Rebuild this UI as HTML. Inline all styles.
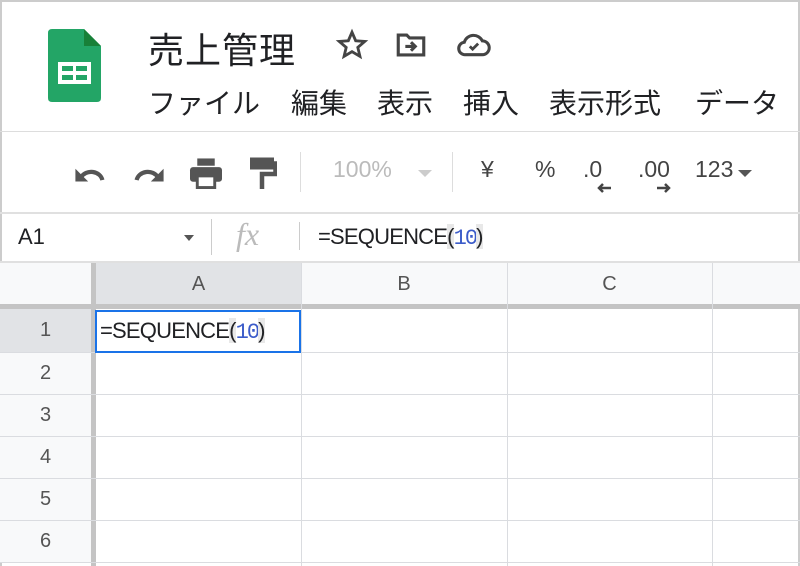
<!DOCTYPE html>
<html><head><meta charset="utf-8"><style>
*{margin:0;padding:0;box-sizing:border-box}
body{width:800px;height:566px;overflow:hidden;background:#fff;font-family:"Liberation Sans","Noto Sans CJK JP",sans-serif;position:relative;color:#202124}
.abs{position:absolute}
.title{left:148px;top:22px;font-size:36px;color:#202124;letter-spacing:1px}
.menu{top:82px;font-size:28px;color:#202124}
.tb{top:156px;font-size:23px;color:#444}
.rh{position:absolute;left:0;width:95px;text-align:center;font-size:20px;color:#555;background:#f8f9fa}
.ch{position:absolute;top:263px;height:42px;text-align:center;font-size:20px;color:#555;line-height:42px;background:#f8f9fa}
</style></head><body>
<div class="abs" style="left:0;top:0;width:800px;height:566px;border:2px solid #ccc;border-bottom:none"></div>
<svg class="abs" style="left:48px;top:29px" width="54" height="74" viewBox="0 0 54 74">
<path d="M4 0H36L53 17V69Q53 73 49 73H4Q0 73 0 69V4Q0 0 4 0Z" fill="#23a566"/>
<path d="M36 0V17H53Z" fill="#188038"/>
<rect x="10" y="33" width="33" height="22" fill="#fff"/>
<rect x="14" y="37" width="11" height="5" fill="#23a566"/><rect x="28" y="37" width="11" height="5" fill="#23a566"/>
<rect x="14" y="46" width="11" height="5" fill="#23a566"/><rect x="28" y="46" width="11" height="5" fill="#23a566"/>
</svg>
<div class="abs title">売上管理</div>
<svg class="abs" style="left:335px;top:28px" width="34" height="34" viewBox="0 0 24 24"><path d="M12 3l2.6 6 6.4.5-4.9 4.2 1.5 6.3L12 16.7 6.4 20l1.5-6.3L3 9.5l6.4-.5z" fill="none" stroke="#444" stroke-width="2"/></svg>
<svg class="abs" style="left:394px;top:28px" width="34" height="34" viewBox="0 0 24 24"><path d="M3 5h6l2 2h10v12H3z" fill="none" stroke="#444" stroke-width="2.2"/><path d="M8 13h7M12 10l3 3-3 3" fill="none" stroke="#444" stroke-width="2.2"/></svg>
<svg class="abs" style="left:456px;top:28px" width="36" height="34" viewBox="0 0 26 24"><path d="M7 19h12a5 5 0 0 0 0-10 7 7 0 0 0-13 1 4.5 4.5 0 0 0 1 9z" fill="none" stroke="#444" stroke-width="2.2"/><path d="M10 13l2 2 4-4" fill="none" stroke="#444" stroke-width="2"/></svg>
<div class="abs menu" style="left:148px">ファイル</div>
<div class="abs menu" style="left:291px">編集</div>
<div class="abs menu" style="left:377px">表示</div>
<div class="abs menu" style="left:463px">挿入</div>
<div class="abs menu" style="left:549px">表示形式</div>
<div class="abs menu" style="left:695px">データ</div>
<div class="abs" style="left:0;top:131px;width:800px;height:1px;background:#ddd"></div>
<svg class="abs" style="left:74px;top:160px" width="34" height="26" viewBox="0 0 24 18"><path d="M5 12a8 7 0 0 1 15 2" fill="none" stroke="#555" stroke-width="3"/><path d="M1 6v9h9z" fill="#555"/></svg>
<svg class="abs" style="left:131px;top:160px" width="34" height="26" viewBox="0 0 24 18"><path d="M19 12a8 7 0 0 0-15 2" fill="none" stroke="#555" stroke-width="3"/><path d="M23 6v9h-9z" fill="#555"/></svg>
<svg class="abs" style="left:188px;top:157px" width="36" height="32" viewBox="0 0 24 22"><rect x="6" y="1" width="12" height="5" fill="#555"/><rect x="1" y="7" width="22" height="10" rx="2" fill="#555"/><rect x="6" y="13" width="12" height="8" fill="#fff" stroke="#555" stroke-width="2"/></svg>
<svg class="abs" style="left:247px;top:156px" width="30" height="36" viewBox="0 0 20 24"><rect x="2" y="1" width="16" height="8" fill="#555"/><path d="M18 5h1v7H10v10" fill="none" stroke="#555" stroke-width="3"/></svg>
<div class="abs" style="left:300px;top:152px;width:1px;height:40px;background:#ddd"></div>
<div class="abs tb" style="left:333px;color:#bbb">100%</div>
<svg class="abs" style="left:418px;top:168px" width="14" height="10"><path d="M0 2h14L7 9z" fill="#ccc"/></svg>
<div class="abs" style="left:452px;top:152px;width:1px;height:40px;background:#ddd"></div>
<div class="abs tb" style="left:481px">¥</div>
<div class="abs tb" style="left:535px">%</div>
<div class="abs tb" style="left:583px">.0</div>
<svg class="abs" style="left:596px;top:182px" width="16" height="12"><path d="M15 6H4M7 2L3 6l4 4" fill="none" stroke="#444" stroke-width="2.5"/></svg>
<div class="abs tb" style="left:638px">.00</div>
<svg class="abs" style="left:656px;top:182px" width="16" height="12"><path d="M1 6h11M9 2l4 4-4 4" fill="none" stroke="#444" stroke-width="2.5"/></svg>
<div class="abs tb" style="left:695px">123</div>
<svg class="abs" style="left:738px;top:168px" width="14" height="10"><path d="M0 2h14L7 9z" fill="#555"/></svg>
<div class="abs" style="left:0;top:212px;width:800px;height:2px;background:#e0e0e0"></div>
<div class="abs" style="left:18px;top:224px;font-size:22px">A1</div>
<svg class="abs" style="left:184px;top:234px" width="10" height="8"><path d="M0 1h10L5 7z" fill="#555"/></svg>
<div class="abs" style="left:211px;top:219px;width:1px;height:36px;background:#ccc"></div>
<div class="abs" style="left:236px;top:216px;font-size:32px;font-style:italic;font-family:'Liberation Serif',serif;color:#bbb">fx</div>
<div class="abs" style="left:299px;top:222px;width:1px;height:28px;background:#ccc"></div>
<div class="abs" style="left:318px;top:224px;font-size:22px;letter-spacing:-0.8px">=SEQUENCE<span style="background:#e8e8e8">(</span><span style="color:#3b5bc9;font-family:'Liberation Mono',monospace;letter-spacing:-2px">10</span><span style="background:#e8e8e8">)</span></div>
<div class="abs" style="left:0;top:261px;width:800px;height:2px;background:#e0e0e0"></div>
<div class="abs" style="left:0;top:263px;width:92px;height:42px;background:#f8f9fa"></div>
<div class="ch" style="left:96px;width:205px;background:#e1e3e6">A</div>
<div class="ch" style="left:301px;width:206px">B</div>
<div class="ch" style="left:507px;width:205px">C</div>
<div class="ch" style="left:712px;width:88px"></div>
<div class="abs" style="left:0;top:304px;width:800px;height:5px;background:#c4c4c4"></div>
<div class="abs" style="left:91px;top:263px;width:5px;height:303px;background:#c4c4c4"></div>
<div class="rh" style="top:309px;height:43px;line-height:43px;width:91px;background:#e1e3e6">1</div>
<div class="rh" style="top:352px;height:42px;line-height:42px;width:91px">2</div>
<div class="rh" style="top:394px;height:42px;line-height:42px;width:91px">3</div>
<div class="rh" style="top:436px;height:42px;line-height:42px;width:91px">4</div>
<div class="rh" style="top:478px;height:42px;line-height:42px;width:91px">5</div>
<div class="rh" style="top:520px;height:42px;line-height:42px;width:91px">6</div>
<div class="abs" style="left:0;top:352px;width:800px;height:1px;background:#dadce0"></div>
<div class="abs" style="left:0;top:394px;width:800px;height:1px;background:#dadce0"></div>
<div class="abs" style="left:0;top:436px;width:800px;height:1px;background:#dadce0"></div>
<div class="abs" style="left:0;top:478px;width:800px;height:1px;background:#dadce0"></div>
<div class="abs" style="left:0;top:520px;width:800px;height:1px;background:#dadce0"></div>
<div class="abs" style="left:0;top:562px;width:800px;height:1px;background:#dadce0"></div>
<div class="abs" style="left:301px;top:263px;width:1px;height:303px;background:#dadce0"></div>
<div class="abs" style="left:507px;top:263px;width:1px;height:303px;background:#dadce0"></div>
<div class="abs" style="left:712px;top:263px;width:1px;height:303px;background:#dadce0"></div>
<div class="abs" style="left:95px;top:310px;width:206px;height:43px;border:2px solid #1a73e8;background:#fff"></div>
<div class="abs" style="left:100px;top:318px;font-size:22px;letter-spacing:-0.8px">=SEQUENCE<span style="background:#e8e8e8">(</span><span style="color:#3b5bc9;font-family:'Liberation Mono',monospace;letter-spacing:-2px">10</span><span style="background:#e8e8e8">)</span></div>
</body></html>
